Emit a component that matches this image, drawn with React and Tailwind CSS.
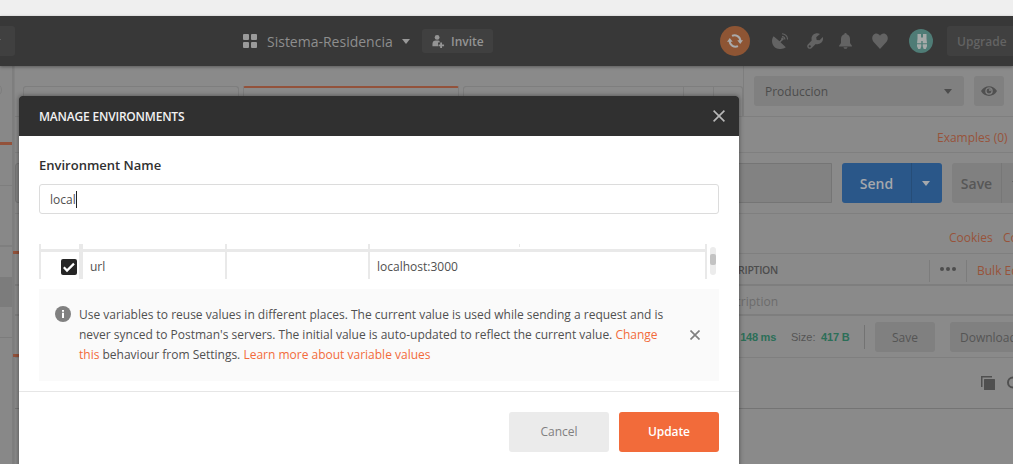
import React from "react";

function Caret({ className }) {
  return (
    <svg className={className} viewBox="0 0 8 5" fill="currentColor">
      <path d="M0 0h8L4 5z" />
    </svg>
  );
}

function Cross({ className, w = 1.6 }) {
  return (
    <svg className={className} viewBox="0 0 12 12" fill="none" stroke="currentColor" strokeWidth={w}>
      <path d="M.6.6l10.8 10.8M11.4.6L.6 11.4" />
    </svg>
  );
}

function Header() {
  return (
    <header className="relative z-10 flex h-[50px] shrink-0 items-center bg-[#383838] shadow-[0_1px_3px_rgba(0,0,0,0.35)]">
      <div className="h-[30px] w-[15px] shrink-0 rounded-r-[3px] bg-[#404040] pt-[13px]">
        <div className="h-px w-px bg-[#606060]" />
      </div>
      <svg className="ml-[228px] size-[14px] shrink-0 text-[#9a9a9a]" viewBox="0 0 14 14" fill="currentColor">
        <rect width="6" height="6" rx="1" />
        <rect x="8" width="6" height="6" rx="1" />
        <rect y="8" width="6" height="6" rx="1" />
        <rect x="8" y="8" width="6" height="6" rx="1" />
      </svg>
      <span className="ml-[10px] w-[127px] shrink-0 whitespace-nowrap pt-[2px] text-[14px] leading-5 text-[#8e8e8e]">Sistema-Residencia</span>
      <Caret className="ml-[8px] h-[5px] w-[8px] shrink-0 text-[#999]" />
      <div className="ml-[12px] flex h-6 w-[71px] shrink-0 items-center rounded-[3px] bg-[#404040] pl-[10px] text-[#949494]">
        <svg className="mt-px size-[13px]" viewBox="0 0 13 14" fill="currentColor">
          <circle cx="5" cy="2.6" r="2.6" />
          <path d="M0 12V9.500C0 7.300 1.500 6 3.500 6h2.500C7 6 7.600 6.400 7.800 7v1H6v4z" />
          <path d="M8.300 8h2v2.200h2.200v2h-2.200V14h-2v-1.800H6.500v-2h1.800z" />
        </svg>
        <span className="ml-[6px] pt-[2px] text-[12px] font-semibold leading-4">Invite</span>
      </div>
      <div className="ml-[227px] flex size-[30px] shrink-0 items-center justify-center rounded-full bg-[#8e5534]">
        <svg className="size-4 text-[#aaa]" viewBox="0 0 16 16" fill="none" stroke="currentColor" strokeWidth="2">
          <path d="M5 2.800A6 6 0 0 1 13.400 8M11 13.200A6 6 0 0 1 2.600 8" />
          <path d="M10.300 7.200h5.700L13.200 11zM0 8.800h5.700L2.800 5z" fill="currentColor" stroke="none" />
        </svg>
      </div>
      <svg className="ml-[22px] size-[16px] shrink-0 text-[#636363]" viewBox="0 0 16 16" fill="currentColor">
        <path d="M1.600 3.200l5.900 5L9.800 6l1 1-2.300 2.200 5.300 5C10 17 4.500 16.500 1.800 13.200-.6 10.200-.5 6 1.600 3.200z" />
        <path d="M10 3.500a3 3 0 0 1 2.900 3M10 .8a5.500 5.500 0 0 1 5.500 5.700" fill="none" stroke="currentColor" strokeWidth="1.100" />
        <circle cx="10.400" cy="5.900" r="1.300" />
      </svg>
      <svg className="ml-[19px] size-[16px] shrink-0 text-[#636363]" viewBox="0 0 16 16" fill="currentColor">
        <path d="M13 .9C8.500-1 3.500 2 4.700 7.400L.8 11.500c-2 2.500 1.200 5.600 3.700 3.700l4.200-4.100C13.600 12.200 17 8 15.800 4L12.600 7.200 9.700 6.900 9.200 4.200zM2.700 12.200a1.100 1.100 0 1 0 .1 2.200 1.100 1.100 0 0 0-.1-2.200z" fillRule="evenodd" />
      </svg>
      <svg className="ml-[16px] h-4 w-[13px] shrink-0 text-[#636363]" viewBox="0 0 13 16" fill="currentColor">
        <path d="M5.300 1.200a1.200 1.200 0 0 1 2.400 0C10 2 11 3.700 11 6v3.500c0 1.500 2 2.200 2 4H0c0-1.800 2-2.500 2-4V6c0-2.300 1-4 3.300-4.800zM4.500 14.200h4c-.3 2.200-3.700 2.200-4 0z" />
      </svg>
      <svg className="ml-[20px] h-[16px] w-[16px] shrink-0 text-[#636363]" viewBox="0 0 17 16" preserveAspectRatio="none" fill="currentColor">
        <path d="M8.500 16L1.500 8.700C-.8 6 .1 1.700 3.200.7 5.500 0 7.500 1 8.500 2.800 9.500 1 11.500 0 13.800.7c3.100 1 4 5.300 1.700 8z" />
      </svg>
      <div className="ml-[21px] flex size-6 shrink-0 items-center justify-center rounded-full bg-[#4f7c76]">
        <svg className="ml-[2px] h-[15px] w-[10px] text-[#a5aaa9]" viewBox="0 0 10 15" fill="currentColor">
          <path d="M.5 0H4v3.500h2V0h3.500v4.500L10 9.200H5.700V7H4.300v2.200H0L.5 4.500zM0 10.200h4.300v2L3.300 15H1.200L0 12.200zM5.700 10.200H10v2L8.800 15H6.700l-1-2.800z" />
        </svg>
      </div>
      <div className="ml-[14px] flex h-[30px] w-[90px] shrink-0 items-center rounded-[3px] bg-[#404040] pl-[10px] pt-[2px] text-[12px] font-semibold text-[#636363]">Upgrade</div>
    </header>
  );
}

function Sidebar() {
  return (
    <aside className="flex w-[14px] shrink-0 flex-col overflow-hidden border-r-2 border-[#7e7e7e] bg-[#888]">
      <div className="h-[76px] pt-[17px]">
        <div className="-ml-[12px] size-[14px] rounded-full border border-[#7e7e7e]" />
      </div>
      <div className="h-[3px] bg-[#93523b]" />
      <div className="h-[41px] border-b border-[#7e7e7e]" />
      <div className="h-[61px] border-b-2 border-[#7f7f7f]" />
      <div className="h-[30px]" />
      <div className="h-[30px] bg-[#7c7c7c]" />
      <div className="h-[31px] border-b border-[#7c7c7c]" />
    </aside>
  );
}

function Tabs() {
  return (
    <div className="flex h-[51px] shrink-0 border-b border-[#7f7f7f]">
      <div className="flex w-[729px] shrink-0 items-end gap-[4px] border-r border-[#7e7e7e] pl-[8px]">
        <div className="h-[30px] w-[216px] shrink-0 rounded-t-[3px] border border-b-0 border-[#7e7e7e]" />
        <div className="h-[30px] w-[216px] shrink-0 rounded-t-[2px] border border-b-0 border-t-2 border-[#7e7e7e] border-t-[#93523b]" />
        <div className="flex h-[30px] w-[280px] shrink-0 rounded-t-[3px] border border-b-0 border-[#7e7e7e]">
          <div className="ml-[219px] w-[31px] border-x border-[#7e7e7e]" />
        </div>
      </div>
      <div className="flex shrink-0 gap-[10px] pl-[10px] pt-[10px]">
        <div className="flex h-[30px] w-[210px] items-center justify-between rounded-[3px] bg-[#808080] pl-[11px] pr-[12px] text-[12px] text-[#4c4c4c]">
          <span className="pt-[2px]">Produccion</span>
          <Caret className="h-[5px] w-[8px]" />
        </div>
        <div className="flex size-[30px] items-center justify-center rounded-[3px] bg-[#808080] text-[#505050]">
          <svg className="h-[10px] w-4" viewBox="0 0 16 10">
            <path d="M0 5C3.500-1.500 12.500-1.500 16 5 12.500 11.500 3.500 11.500 0 5z" fill="currentColor" />
            <circle cx="8" cy="5" r="3.100" fill="none" stroke="#808080" strokeWidth="1.300" />
            <circle cx="9" cy="4" r="1" fill="#808080" />
          </svg>
        </div>
      </div>
    </div>
  );
}

function Workspace() {
  return (
    <main className="flex w-[999px] shrink-0 flex-col border-l border-[#838383]">
      <Tabs />
      <div className="flex h-9 shrink-0 items-center border-b border-[#7f7f7f] pl-[922px] pt-[7px] text-[12px] text-[#98533a]">
        <span className="whitespace-nowrap">Examples (0)</span>
      </div>
      <div className="flex h-[61px] shrink-0 items-center border-b border-[#7f7f7f]">
        <div className="h-10 w-[817px] shrink-0 rounded-l-[3px] border border-[#757575] bg-[#828282]" />
        <div className="ml-[10px] flex h-10 w-[100px] shrink-0 overflow-hidden rounded-[3px] bg-[#2a5789] text-[#a5a8ac]">
          <div className="flex w-[70px] items-center justify-center border-r border-[#264d78] pt-px text-[14px] font-semibold">Send</div>
          <div className="flex flex-1 items-center justify-center pr-[2px]">
            <Caret className="h-[5px] w-[8px]" />
          </div>
        </div>
        <div className="ml-[10px] flex h-10 w-[80px] shrink-0 rounded-[3px] bg-[#808080] text-[#575757]">
          <div className="flex w-[50px] items-center justify-center border-r border-[#777] pt-px text-[14px] font-semibold">Save</div>
          <Caret className="ml-[10px] mt-[18px] h-[5px] w-[8px]" />
        </div>
      </div>
      <div className="flex h-[40px] shrink-0 items-center border-b border-[#7f7f7f] pl-[934px] pt-[9px] text-[12px] text-[#98533a]">
        <span className="w-[54px] shrink-0">Cookies</span>
        <span>Code</span>
      </div>
      <div className="flex h-8 shrink-0 items-center border-b-2 border-t-[3px] border-[#7e7e7e] border-t-transparent text-[10.5px]">
        <span className="w-[763px] shrink-0 pt-px text-right font-semibold tracking-[-0.3px] text-[#4d4d4d]">DESCRIPTION</span>
        <div className="ml-[151px] flex h-[22px] w-[38px] shrink-0 items-center justify-center gap-[2px] border-x border-[#7c7c7c] pb-[3px]">
          <i className="size-[4px] rounded-full bg-[#4d4d4d]" />
          <i className="size-[4px] rounded-full bg-[#4d4d4d]" />
          <i className="size-[4px] rounded-full bg-[#4d4d4d]" />
        </div>
        <span className="ml-[10px] whitespace-nowrap pt-px text-[12px] text-[#98533a]">Bulk Edit</span>
      </div>
      <div className="flex h-[30px] shrink-0 items-center border-b-2 border-[#7e7e7e] pt-[3px] text-[12px] text-[#6c6c6c]">
        <span className="w-[763px] text-right">Description</span>
      </div>
      <div className="flex h-[42px] shrink-0 items-center border-b border-[#7f7f7f] font-['Liberation_Sans'] text-[12px] text-[#555]">
        <span className="w-[761px] shrink-0 pt-[2px] text-right text-[11px] font-bold tracking-[-0.25px] text-[#2c6f58]">148 ms</span>
        <span className="ml-[15px] w-[30px] shrink-0 pt-[2px] text-[11px]">Size:</span>
        <span className="w-[43px] shrink-0 pt-[2px] text-[11px] font-bold tracking-[-0.15px] text-[#2c6f58]">417 B</span>
        <div className="h-6 w-px shrink-0 bg-[#737373]" />
        <div className="ml-[10px] flex h-[30px] w-[60px] shrink-0 items-center justify-center rounded-[3px] bg-[#808080] pt-[2px] font-['Open_Sans']">Save</div>
        <div className="ml-[15px] flex h-[30px] w-[80px] shrink-0 items-center rounded-[3px] bg-[#808080] pl-[10px] pt-[2px] font-['Open_Sans']">Download</div>
      </div>
      <div className="flex h-[51px] shrink-0 items-center border-b border-[#747474] pl-[966px]">
        <svg className="size-[14px] shrink-0 text-[#505050]" viewBox="0 0 14 14" fill="currentColor">
          <path d="M0 0h11v1.500H1.500V11H0z" />
          <rect x="3" y="3" width="11" height="11" rx=".5" />
        </svg>
        <svg className="ml-[12px] size-[15px] shrink-0 text-[#505050]" viewBox="0 0 15 15" fill="none" stroke="currentColor" strokeWidth="2">
          <circle cx="6" cy="6.500" r="5" />
          <path d="M10 10.500l4 4" />
        </svg>
      </div>
    </main>
  );
}

function LeftAccents() {
  return (
    <>
      <div className="absolute left-[13px] top-[251px] h-[3px] w-[6px] bg-[#93523b]" />
      <div className="absolute left-[13px] top-[354px] h-[3px] w-[6px] bg-[#93523b]" />
    </>
  );
}

function VariableTable() {
  return (
    <div className="mt-[30px] flex h-[35px] text-[12px] text-[#505050]">
      <div className="flex w-[668px] flex-col">
        <div className="flex h-[5px] border-l-2 border-r-2 border-[#e9e9e9]">
          <div className="w-[38px]" />
          <div className="w-[4px] bg-[#e9e9e9]" />
          <div className="w-[142px]" />
          <div className="w-[2px] bg-[#e9e9e9]" />
          <div className="w-[141px]" />
          <div className="w-[2px] bg-[#e9e9e9]" />
          <div className="w-[149px]" />
          <div className="h-[3px] w-px bg-[#e9e9e9]" />
        </div>
        <div className="flex flex-1 border-x-2 border-t-[3px] border-[#e9e9e9]">
          <div className="flex w-[38px] shrink-0 justify-end pr-[2px] pt-[7px]">
            <svg className="size-4" viewBox="0 0 16 16">
              <rect width="16" height="16" rx="2" fill="#252525" />
              <path d="M2.800 8.300l3.200 3.300 7-7" fill="none" stroke="#fff" strokeWidth="2.200" />
            </svg>
          </div>
          <div className="w-[146px] shrink-0 border-l-4 border-[#e9e9e9] pl-[7px] pt-[5px] leading-5">url</div>
          <div className="w-[143px] shrink-0 border-l-2 border-[#e9e9e9]" />
          <div className="flex-1 border-l-2 border-[#e9e9e9] pl-[7px] pt-[5px] leading-5">localhost:3000</div>
        </div>
      </div>
      <div className="ml-[3px] mt-[3px] h-[28px] w-[6px] rounded-full bg-[#ececec] pt-[7px]">
        <div className="h-[11px] rounded-[2px] bg-[#c3c3c3]" />
      </div>
    </div>
  );
}

function Modal() {
  return (
    <section className="absolute left-[19px] top-[96px] z-20 flex h-[390px] w-[720px] flex-col rounded-t-[3px] bg-white shadow-[0_0_5px_rgba(0,0,0,0.45)]">
      <div className="flex h-10 shrink-0 items-center justify-between rounded-t-[3px] bg-[#303030] pl-5 pr-[14px]">
        <h1 className="pt-[2px] text-[12px] font-semibold tracking-[-0.2px] text-[#f2f2f2]">MANAGE ENVIRONMENTS</h1>
        <Cross className="size-3 text-[#b8b8b8]" />
      </div>
      <div className="flex h-[256px] shrink-0 flex-col border-b border-[#e6e6e6] px-5">
        <label className="mt-[19px] text-[13px] font-semibold leading-5 text-[#303030]">Environment Name</label>
        <div className="mt-[9px] flex h-[30px] shrink-0 items-center rounded-[3px] border border-[#dcdcdc] pl-[10px] text-[12px] text-[#505050]">
          <span className="pt-[2px]">local</span>
          <span className="h-[17px] w-px bg-[#222]" />
        </div>
        <VariableTable />
        <div className="mt-[10px] flex h-[92px] bg-[#fafafa] pl-4 text-[12px] leading-5 text-[#505050]">
          <svg className="mt-[17px] size-4 shrink-0" viewBox="0 0 16 16">
            <circle cx="8" cy="8" r="8" fill="#808080" />
            <path d="M7 4h2v1.700H7zM7 6.800h2V12H7z" fill="#fff" />
          </svg>
          <p className="ml-[8px] mt-[16px] w-[600px] shrink-0 whitespace-nowrap">
            Use variables to reuse values in different places. The current value is used while sending a request and is
            <br />
            never synced to Postman's servers. The initial value is auto-updated to reflect the current value. <a className="text-[#f26b3a]">Change</a>
            <br />
            <a className="text-[#f26b3a]">this</a> behaviour from Settings. <a className="text-[#f26b3a]">Learn more about variable values</a>
          </p>
          <Cross className="ml-[11px] mt-[41px] size-[10px] shrink-0 text-[#808080]" w={2} />
        </div>
      </div>
      <div className="flex justify-end gap-[10px] pr-5 pt-5">
        <button className="h-10 w-[100px] rounded-[3px] bg-[#ebebeb] text-[12px] text-[#808080]">Cancel</button>
        <button className="h-10 w-[100px] rounded-[3px] bg-[#f26b3a] text-[12px] font-semibold tracking-[-0.1px] text-white">Update</button>
      </div>
    </section>
  );
}

export default function App() {
  return (
    <div className="relative flex h-[464px] w-[1013px] flex-col overflow-hidden bg-[#8a8a8a] font-['Open_Sans',sans-serif]">
      <div className="h-4 shrink-0 bg-[#efefef]" />
      <Header />
      <div className="flex min-h-0 flex-1">
        <Sidebar />
        <Workspace />
      </div>
      <LeftAccents />
      <Modal />
    </div>
  );
}
